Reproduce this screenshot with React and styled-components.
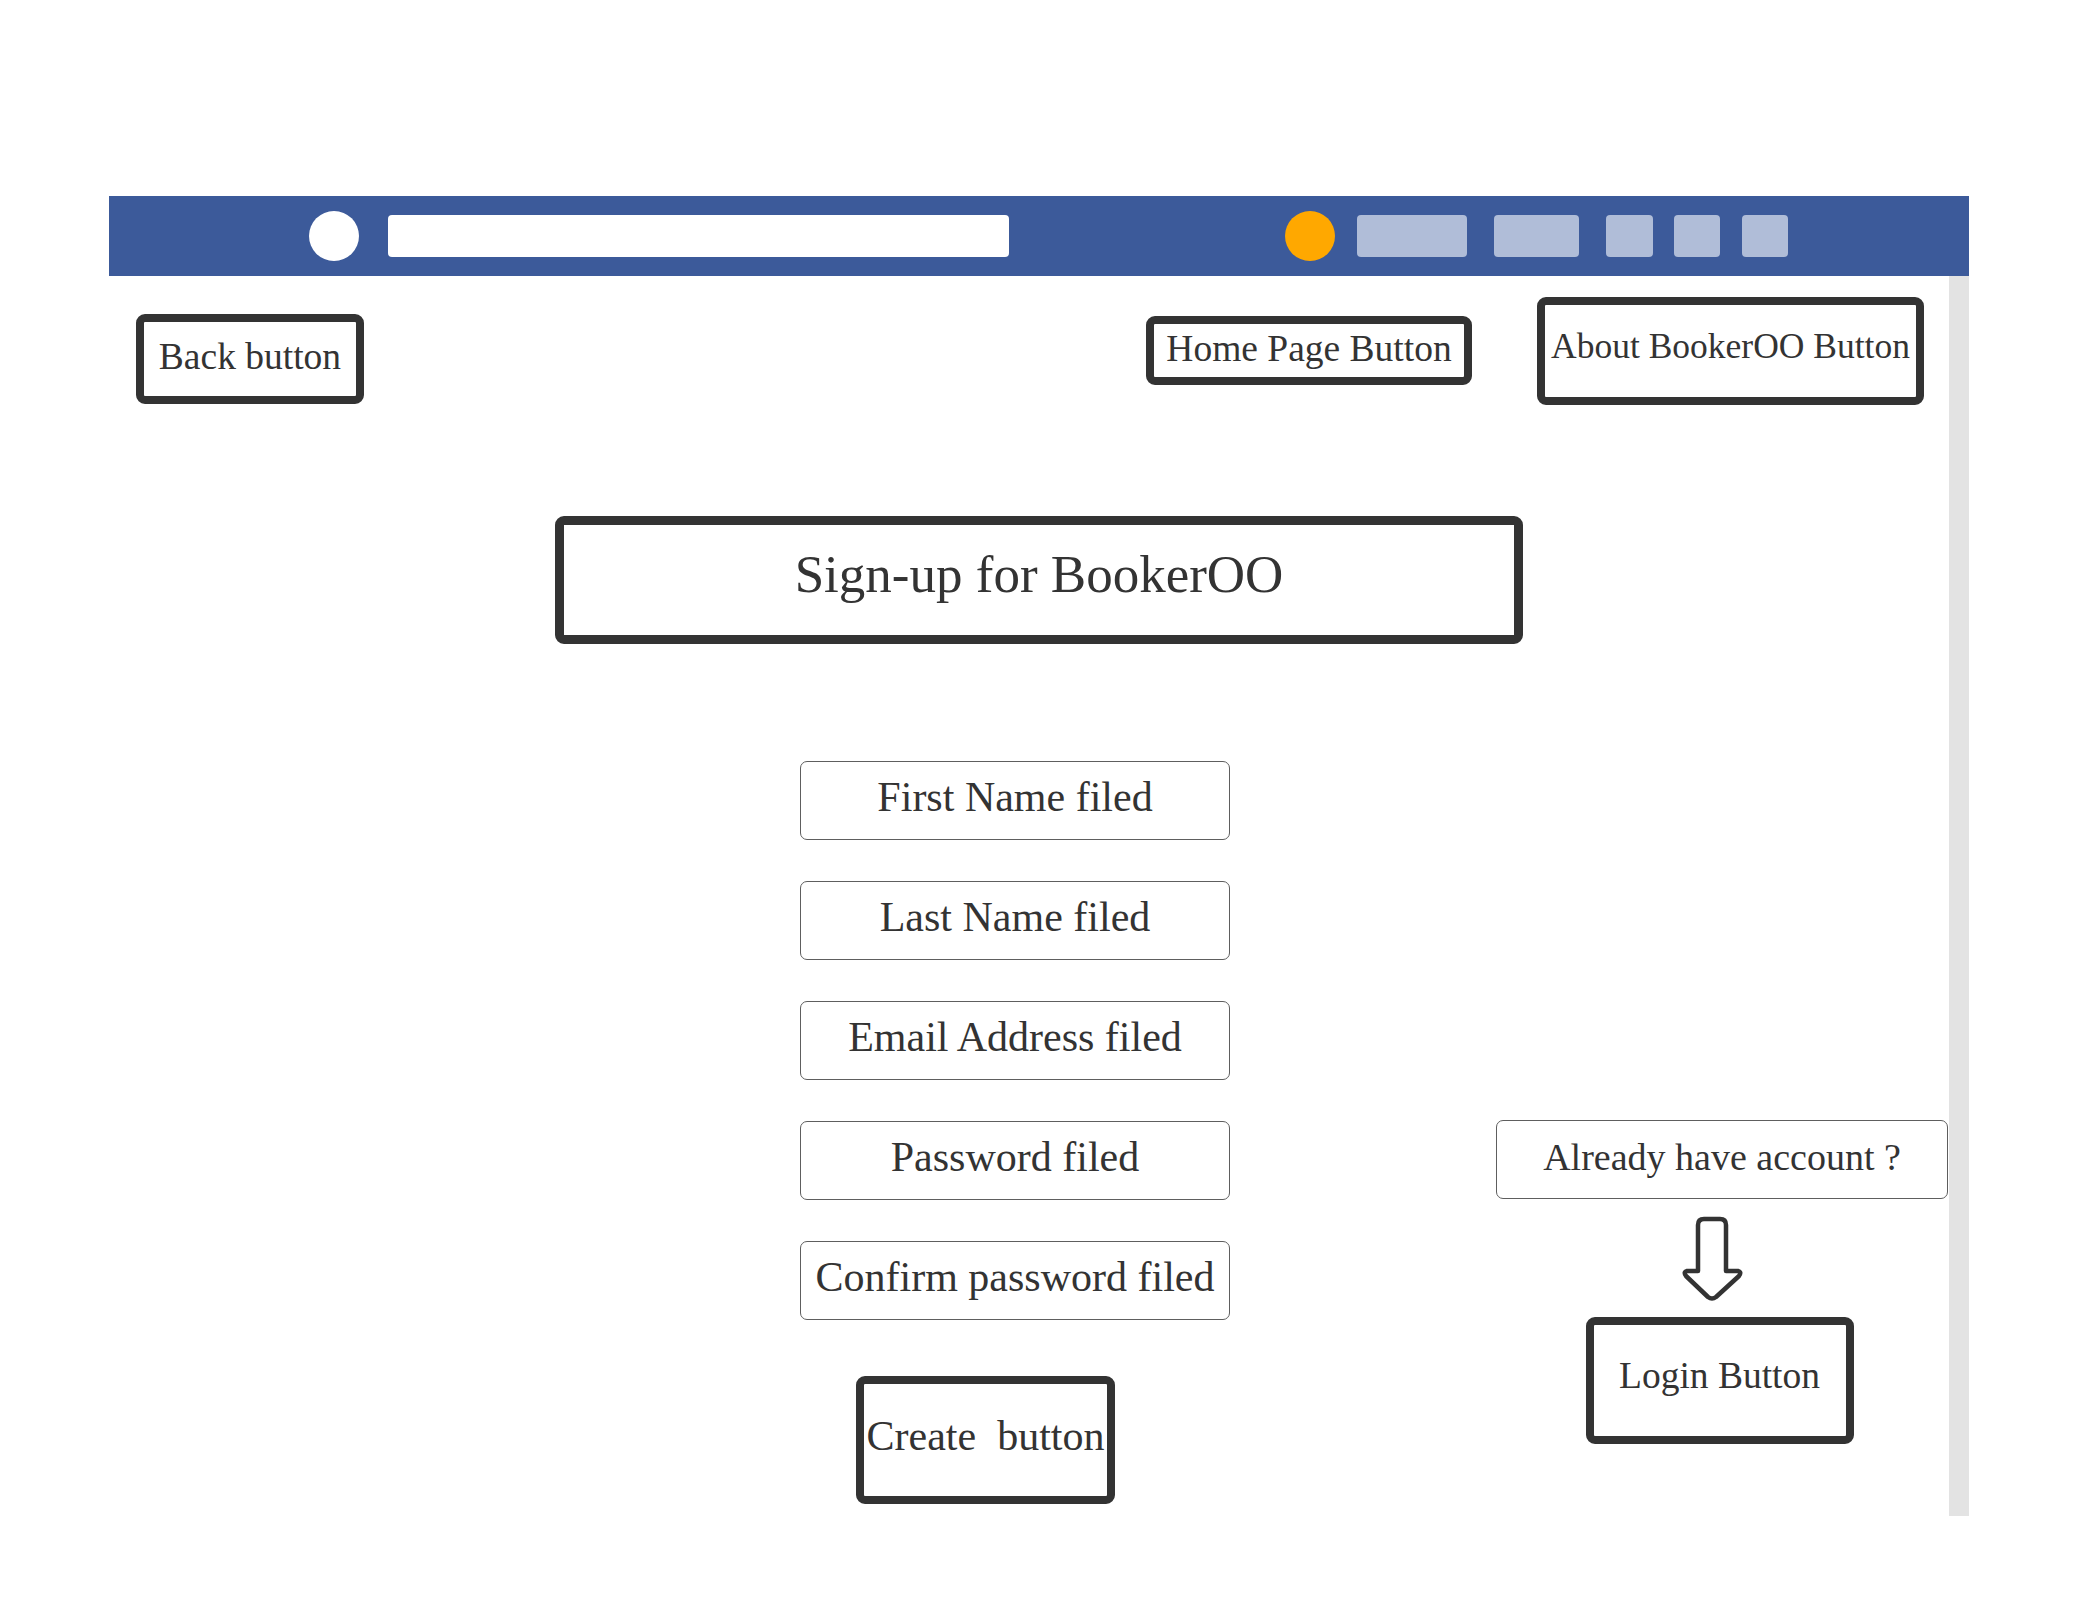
import React from 'react'
import styled, { createGlobalStyle } from 'styled-components'

const GlobalStyle = createGlobalStyle`
  html, body {
    margin: 0;
    padding: 0;
    background: #ffffff;
  }
  body {
    font-family: "Liberation Serif", "Times New Roman", serif;
    color: #333333;
  }
`

const Page = styled.div`
  width: 2089px;
  height: 1613px;
  padding: 196px 0 0 109px;
  box-sizing: border-box;
`

const Frame = styled.div`
  display: flex;
  flex-direction: column;
  width: 1860px;
`

const NavBar = styled.div`
  display: flex;
  align-items: center;
  height: 80px;
  padding-left: 200px;
  background: #3c5a9a;
`

const Dot = styled.div`
  width: 50px;
  height: 50px;
  border-radius: 50%;
  flex-shrink: 0;
  margin-left: ${p => p.$ml || 0}px;
  background: ${p => p.$color};
`

const NavPill = styled.div`
  height: 42px;
  width: ${p => p.$w}px;
  margin-left: ${p => p.$ml}px;
  border-radius: 4px;
  flex-shrink: 0;
  background: ${p => (p.$light ? '#ffffff' : '#b0bdd8')};
`

const Body = styled.div`
  display: flex;
  height: 1240px;
`

const Canvas = styled.div`
  flex: 1;
  display: flex;
  flex-direction: column;
  align-items: flex-start;
`

const ScrollStrip = styled.div`
  width: 20px;
  background: #e3e3e3;
`

const TopRow = styled.div`
  display: flex;
  align-items: flex-start;
  padding-top: 21px;
`

const BoldBox = styled.div`
  box-sizing: border-box;
  display: flex;
  align-items: center;
  justify-content: center;
  flex-shrink: 0;
  width: ${p => p.$w}px;
  height: ${p => p.$h}px;
  margin-left: ${p => p.$ml || 0}px;
  margin-right: ${p => p.$mr || 0}px;
  margin-top: ${p => p.$mt || 0}px;
  padding-bottom: ${p => p.$pb || 4}px;
  border: ${p => p.$bw || 8}px solid #333333;
  border-radius: 9px;
  background: #ffffff;
  font-size: ${p => p.$fs}px;
  line-height: 1;
  white-space: pre;
  color: #333333;
`

const Lower = styled.div`
  display: flex;
  align-items: flex-start;
  margin-top: 117px;
`

const FieldColumn = styled.div`
  display: flex;
  flex-direction: column;
  margin-left: 691px;
  width: 430px;
  gap: 41px;
`

const Field = styled.div`
  box-sizing: border-box;
  display: flex;
  align-items: center;
  justify-content: center;
  width: ${p => p.$w || 430}px;
  height: 79px;
  padding-bottom: ${p => p.$pb || 8}px;
  border: 1.5px solid #5e5e5e;
  border-radius: 7px;
  background: #ffffff;
  font-size: ${p => p.$fs || 42}px;
  line-height: 1;
  white-space: nowrap;
  color: #333333;
`

const RightColumn = styled.div`
  display: flex;
  flex-direction: column;
  align-items: center;
  margin-left: 266px;
  padding-top: 359px;
  width: 452px;
`

const ArrowWrap = styled.div`
  display: flex;
  margin: 16px 18px 16px 0;
`

const DownArrow = () => (
  <svg width="64" height="86" viewBox="0 0 64 86" fill="none">
    <path
      d="M17 10 Q17 4 23 4 L39 4 Q45 4 45 10 L45 56 L57 56 Q61 57 58 61 L35 82 Q31 85 27 82 L5 61 Q2 57 6 56 L17 56 Z"
      stroke="#333333"
      strokeWidth="4.5"
      strokeLinejoin="round"
    />
  </svg>
)

const fields = [
  'First Name filed',
  'Last Name filed',
  'Email Address filed',
  'Password filed',
  'Confirm password filed',
]

export default function App() {
  return (
    <>
      <GlobalStyle />
      <Page>
        <Frame>
          <NavBar>
            <Dot $color="#ffffff" />
            <NavPill $light $w={621} $ml={29} />
            <Dot $color="#ffa800" $ml={276} />
            <NavPill $w={110} $ml={22} />
            <NavPill $w={85} $ml={27} />
            <NavPill $w={47} $ml={27} />
            <NavPill $w={46} $ml={21} />
            <NavPill $w={46} $ml={22} />
          </NavBar>
          <Body>
            <Canvas>
              <TopRow>
                <BoldBox $w={228} $h={90} $ml={27} $mt={17} $fs={37.5}>
                  Back button
                </BoldBox>
                <BoldBox $w={326} $h={69} $ml={782} $mt={19} $fs={37.5}>
                  Home Page Button
                </BoldBox>
                <BoldBox $w={387} $h={108} $ml={65} $fs={35.5} $pb={8}>
                  About BookerOO Button
                </BoldBox>
              </TopRow>

              <BoldBox $w={968} $h={128} $ml={446} $mt={111} $fs={53} $bw={9} $pb={12}>
                Sign-up for BookerOO
              </BoldBox>

              <Lower>
                <FieldColumn>
                  {fields.map(f => (
                    <Field key={f}>{f}</Field>
                  ))}
                  <BoldBox $w={259} $h={128} $ml={56} $mt={15} $fs={42} $pb={8}>
                    {'Create  button'}
                  </BoldBox>
                </FieldColumn>
                <RightColumn>
                  <Field $w={452} $fs={38} $pb={6}>
                    Already have account ?
                  </Field>
                  <ArrowWrap>
                    <DownArrow />
                  </ArrowWrap>
                  <BoldBox $w={268} $h={127} $mr={5} $fs={37.5} $pb={10}>
                    Login Button
                  </BoldBox>
                </RightColumn>
              </Lower>
            </Canvas>
            <ScrollStrip />
          </Body>
        </Frame>
      </Page>
    </>
  )
}
